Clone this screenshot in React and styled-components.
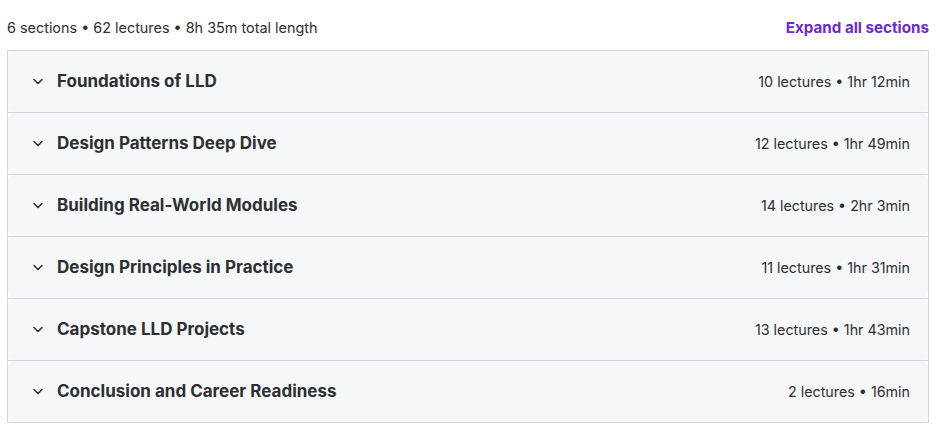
import React from "react";
import styled, { createGlobalStyle } from "styled-components";

const GlobalStyle = createGlobalStyle`
  body {
    margin: 0;
    background: #ffffff;
    font-family: "Inter", "Noto Sans", sans-serif;
    color: #2d2f31;
  }
`;

const Page = styled.div`
  padding: 0 7px;
`;

const Header = styled.div`
  height: 50px;
  padding-top: 5px;
  box-sizing: border-box;
  display: flex;
  align-items: center;
  justify-content: space-between;
`;

const Summary = styled.span`
  font-size: 14.4px;
  color: #2d2f31;
`;

const ExpandAll = styled.button`
  border: none;
  background: none;
  padding: 0;
  font-family: inherit;
  font-size: 15.2px;
  font-weight: 700;
  color: #6d28d2;
  cursor: pointer;
`;

const List = styled.div`
  border: 1px solid #d1d2e0;
`;

const Section = styled.div`
  border-top: ${(p) => (p.$first ? "none" : "1px solid #d1d2e0")};
`;

const Row = styled.div`
  height: 61px;
  display: flex;
  align-items: center;
  background: #f6f7f9;
  border-radius: 6px;
  padding: 0 18px 0 23px;
  gap: 12px;
`;

const Chevron = styled.svg`
  width: 14px;
  height: 14px;
  flex-shrink: 0;
  margin-top: -2px;
`;

const Title = styled.span`
  flex: 1;
  font-size: 17px;
  font-weight: 700;
  color: #2d2f31;
  margin-top: -2px;
`;

const Meta = styled.span`
  font-size: 14.3px;
  color: #2d2f31;
`;

const sections = [
  ["Foundations of LLD", "10 lectures • 1hr 12min"],
  ["Design Patterns Deep Dive", "12 lectures • 1hr 49min"],
  ["Building Real-World Modules", "14 lectures • 2hr 3min"],
  ["Design Principles in Practice", "11 lectures • 1hr 31min"],
  ["Capstone LLD Projects", "13 lectures • 1hr 43min"],
  ["Conclusion and Career Readiness", "2 lectures • 16min"],
];

export default function App() {
  return (
    <Page>
      <GlobalStyle />
      <Header>
        <Summary>6 sections • 62 lectures • 8h 35m total length</Summary>
        <ExpandAll>Expand all sections</ExpandAll>
      </Header>
      <List>
        {sections.map(([title, meta], i) => (
          <Section key={title} $first={i === 0}>
            <Row>
              <Chevron viewBox="0 0 14 14" fill="none">
                <path d="M3 5.5l4 4 4-4" stroke="#2d2f31" strokeWidth="1.6" strokeLinecap="round" strokeLinejoin="round" />
              </Chevron>
              <Title>{title}</Title>
              <Meta>{meta}</Meta>
            </Row>
          </Section>
        ))}
      </List>
    </Page>
  );
}
